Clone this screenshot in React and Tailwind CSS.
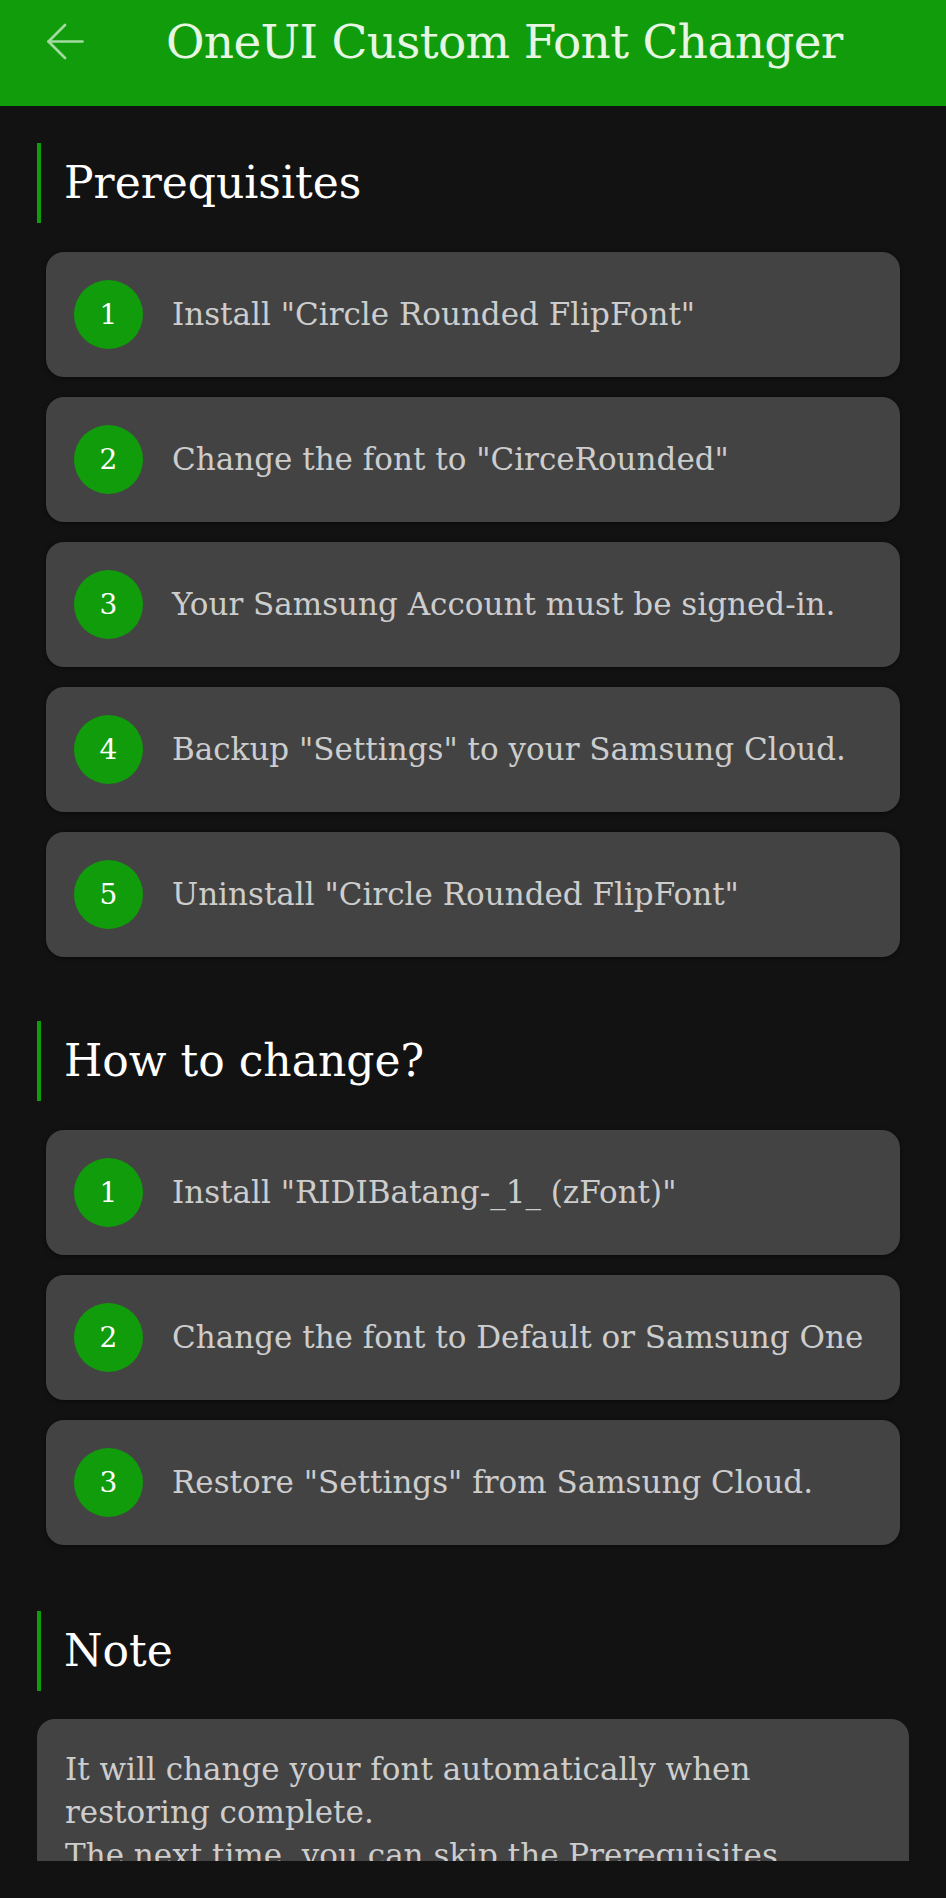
import React from "react";

const font = { fontFamily: '"DejaVu Serif", serif' };

const prereqs = [
  'Install "Circle Rounded FlipFont"',
  'Change the font to "CirceRounded"',
  "Your Samsung Account must be signed-in.",
  'Backup "Settings" to your Samsung Cloud.',
  'Uninstall "Circle Rounded FlipFont"',
];

const howto = [
  'Install "RIDIBatang-_1_ (zFont)"',
  "Change the font to Default or Samsung One",
  'Restore "Settings" from Samsung Cloud.',
];

function Heading({ children }) {
  return (
    <div className="ml-[37px] h-[80px] border-l-[4px] border-[#119c0b] flex items-center pl-[23px]">
      <span className="text-[44px] leading-none text-white">{children}</span>
    </div>
  );
}

function Step({ n, text }) {
  return (
    <div className="ml-[46px] w-[854px] h-[125px] rounded-[18px] bg-[#434343] shadow-[0_1px_4px_rgba(0,0,0,0.5)] flex items-center pl-[28px]">
      <div className="w-[69px] h-[69px] rounded-full bg-[#119c0b] flex items-center justify-center text-[28px] text-white shrink-0">
        {n}
      </div>
      <span className="ml-[29px] text-[31px] text-[#cdcdcd] whitespace-nowrap">{text}</span>
    </div>
  );
}

export default function App() {
  return (
    <div className="w-[946px] h-[1898px] bg-[#121212] overflow-hidden flex flex-col" style={font}>
      <div className="h-[106px] bg-[#119c0b] flex items-start shrink-0">
        <svg className="ml-[47px] mt-[23px] shrink-0" width="37" height="37" viewBox="0 0 37 37" fill="none" stroke="#a3daa0" strokeWidth="2.6" strokeLinecap="round" strokeLinejoin="round">
          <path d="M35.5 18.5H1.5" />
          <path d="M18 2L1.5 18.5L18 35" />
        </svg>
        <span className="ml-[82px] mt-[7px] text-[47px] tracking-[-0.7px] text-[#e6f6e3] whitespace-nowrap">OneUI Custom Font Changer</span>
      </div>
      <div className="h-[1755px] overflow-hidden shrink-0">
        <div className="pt-[37px]">
          <Heading>Prerequisites</Heading>
          <div className="mt-[29px] flex flex-col gap-[20px]">
            {prereqs.map((t, i) => (
              <Step key={i} n={i + 1} text={t} />
            ))}
          </div>
          <div className="mt-[64px]">
            <Heading>How to change?</Heading>
          </div>
          <div className="mt-[29px] flex flex-col gap-[20px]">
            {howto.map((t, i) => (
              <Step key={i} n={i + 1} text={t} />
            ))}
          </div>
          <div className="mt-[66px]">
            <Heading>Note</Heading>
          </div>
          <div className="mt-[28px] ml-[37px] w-[872px] rounded-[18px] bg-[#434343] pl-[28px] pr-[70px] pt-[29px] pb-[30px] text-[31px] leading-[43px] text-[#cdcdcd]">
            <p>It will change your font automatically when restoring complete.</p>
            <p>The next time, you can skip the Prerequisites.</p>
          </div>
        </div>
      </div>
    </div>
  );
}
